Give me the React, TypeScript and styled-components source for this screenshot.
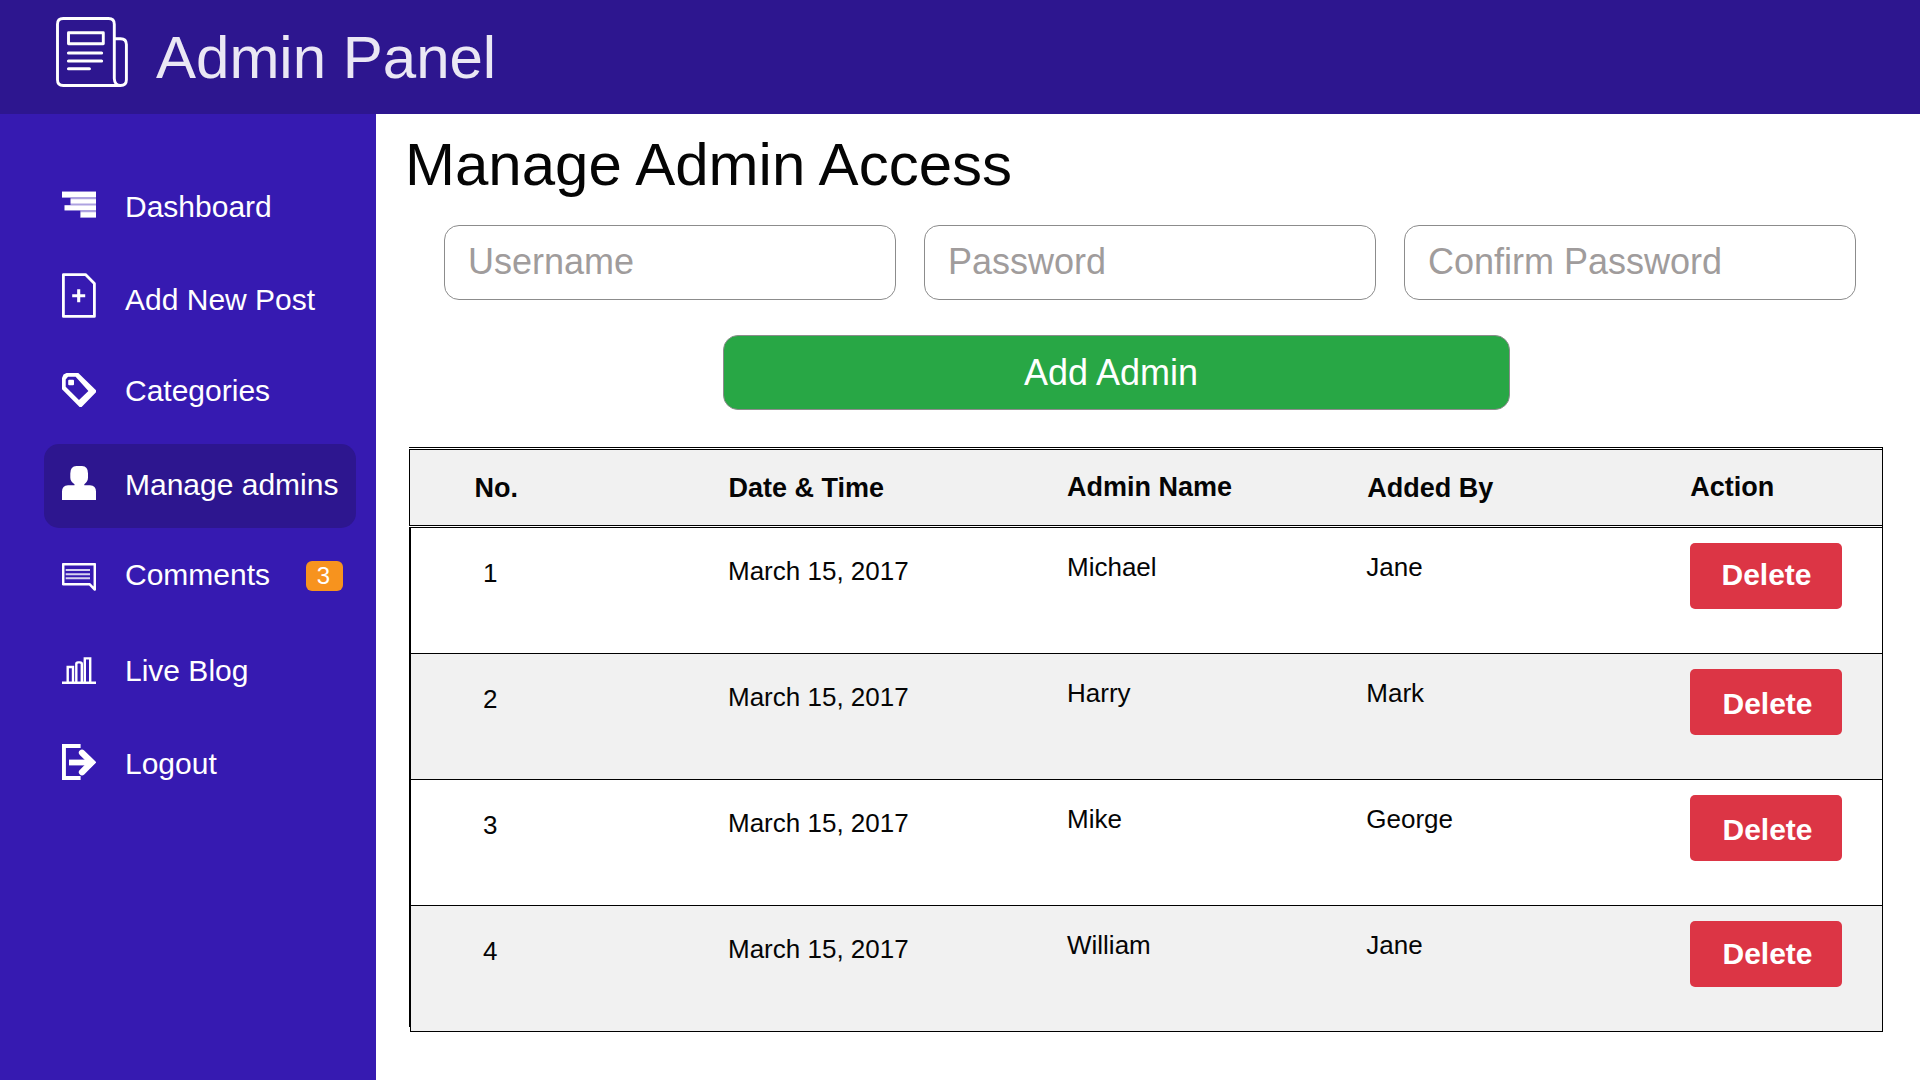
import React from "react";
import styled, { createGlobalStyle } from "styled-components";

const GlobalStyle = createGlobalStyle`
  *, *::before, *::after { box-sizing: border-box; }
  body {
    margin: 0;
    background: #fff;
    font-family: "Liberation Sans", Arial, Helvetica, sans-serif;
    color: #050505;
  }
  svg { display: block; flex: none; }
`;

const Page = styled.div`
  display: grid;
  grid-template: 114px 1fr / 376px 1fr;
  width: 1920px;
  height: 1080px;
  overflow: hidden;
`;

const Header = styled.header`
  grid-column: 1 / -1;
  display: flex;
  align-items: flex-start;
  gap: 28px;
  padding-left: 56px;
  background: #2d168f;

  svg { margin-top: 17px; }
`;

const Brand = styled.div`
  font-size: 60px;
  line-height: 116px;
  color: #eae7f4;
`;

const Sidebar = styled.nav`
  display: flex;
  flex-direction: column;
  padding: 52px 20px 0 44px;
  background: #361ab1;
`;

const NavItem = styled.a<{ $gap: number; $active?: boolean }>`
  display: flex;
  align-items: flex-start;
  flex: none;
  height: 84px;
  margin-top: ${(p) => p.$gap}px;
  padding: 0 13px 0 18px;
  border-radius: 15px;
  background: ${(p) => (p.$active ? "#2d168f" : "transparent")};
  color: #fff;
`;

const NavIcon = styled.span<{ $drop: number }>`
  flex: none;
  width: 34px;
  margin-top: ${(p) => p.$drop}px;
`;

const NavLabel = styled.span`
  margin-left: 29px;
  font-size: 30px;
  line-height: 81px;
  white-space: nowrap;
`;

const Badge = styled.span`
  width: 37px;
  height: 30px;
  margin: 27px 0 0 auto;
  padding-right: 2px;
  border-radius: 6px;
  background: #f7931e;
  font-size: 24px;
  line-height: 29px;
  text-align: center;
`;

const Main = styled.main`
  display: flex;
  flex-direction: column;
  align-items: flex-start;
`;

const Title = styled.h1`
  margin: 0 0 9px 29px;
  font-size: 60px;
  font-weight: 400;
  line-height: 102px;
`;

const Fields = styled.div`
  display: flex;
  gap: 28px;
  margin-left: 68px;
`;

const Field = styled.input`
  width: 452px;
  height: 75px;
  padding: 0 22px 1px 23px;
  border: 1px solid #8c8c8c;
  border-radius: 15px;
  background: #fff;
  font: 36px "Liberation Sans", Arial, sans-serif;

  &::placeholder { color: #a09c9c; opacity: 1; }
`;

const AddButton = styled.button`
  width: 787px;
  height: 75px;
  margin: 35px 0 37px 347px;
  padding: 0 11px 0 0;
  border: 1px solid #8c8c8c;
  border-radius: 15px;
  background: #28a745;
  color: #fff;
  font: 36px "Liberation Sans", Arial, sans-serif;
`;

const Table = styled.section`
  width: 1474px;
  margin-left: 33px;
`;

const columns = "253px 339px 300px 324px 1fr";

const HeadRow = styled.div`
  display: grid;
  grid-template-columns: ${columns};
  height: 81px;
  padding-left: 64px;
  border: solid #000;
  border-width: 3px 1px;
  border-top-style: double;
  border-bottom-style: double;
  background: #f1f1f1 padding-box;
`;

const HeadCell = styled.div<{ $line: number; $indent?: number }>`
  padding-left: ${(p) => p.$indent ?? 0}px;
  font-size: 27px;
  font-weight: 700;
  line-height: ${(p) => p.$line}px;
  white-space: nowrap;
`;

const Body = styled.div`
  padding-left: 1px;
  background: linear-gradient(#000, #000) 0 0 / 1px calc(100% - 5px) no-repeat;
`;

const Row = styled.div`
  display: grid;
  grid-template-columns: ${columns};
  height: 126px;
  padding-left: 63px;
  border: solid #000;
  border-width: 0 1px 1px;
  background: #fff;

  &:nth-child(even) { background: #f1f1f1; }
`;

const Cell = styled.div<{ $line: number; $indent?: number }>`
  padding-left: ${(p) => p.$indent ?? 0}px;
  font-size: 26px;
  line-height: ${(p) => p.$line}px;
  white-space: nowrap;
`;

const DeleteButton = styled.button<{ $line: number; $indent: number }>`
  display: block;
  width: 152px;
  height: 66px;
  margin-top: 15px;
  padding: 0 0 0 ${(p) => p.$indent}px;
  border: 0;
  border-radius: 5px;
  background: #dc3545;
  color: #fff;
  font: 700 30px "Liberation Sans", Arial, sans-serif;
  text-align: left;

  span {
    display: block;
    height: 66px;
    line-height: ${(p) => p.$line}px;
  }
`;

const NewspaperIcon = () => (
  <svg width="72" height="70" viewBox="0 0 72 70" fill="none" stroke="#fff" strokeWidth="2.9" strokeLinecap="round" strokeLinejoin="round">
    <path d="M58.3 21.8V7.3Q58.3 1.5 52.5 1.5H7.2Q1.5 1.5 1.5 7.3V62.7Q1.5 68.5 7.2 68.5H64.5Q70.4 68.5 70.4 62.7V27.6Q70.4 21.8 64.5 21.8H58.3V61.5Q58.6 68.5 64.5 68.5" />
    <path d="M12.5 15.7H47.3V26.8H12.5Z" />
    <path strokeWidth="3.1" d="M12.5 36H45.6M12.5 44H45.6M12.5 51.8H33.4" />
  </svg>
);

const DashboardIcon = () => (
  <svg width="34" height="27" viewBox="0 0 34 27" fill="#fff">
    <path opacity=".6" d="M0 .3H34V27H18.3V19.7H2.5V14H8.5V7H0Z" />
    <path d="M0 1H34V6H0ZM8.7 8.3H34V12.6H8.7ZM2.7 14.6H34V19H2.7ZM18.7 21.3H34V26H18.7Z" />
  </svg>
);

const AddPostIcon = () => (
  <svg width="34" height="45" viewBox="0 0 34 45" fill="none" stroke="#fff">
    <path strokeWidth="2.8" strokeLinejoin="round" d="M1.4 1.6H23.5L32.4 10.4V43.4H1.4Z" />
    <path strokeWidth="3.1" d="M16.7 16.2V29.2M10.2 22.7H23.2" />
  </svg>
);

const TagIcon = () => (
  <svg width="34" height="35" viewBox="0 0 34 35" fill="#fff">
    <path fillRule="evenodd" d="M1.5 1.5L4.5 0H16.3L34 17.3V19.2L19.6 34H17.6L0 16.3V5ZM6 3.8L3.7 6.5V13.8L17 27L26.4 18L13.6 3.8Z" />
    <rect x="6.2" y="6.8" width="5.8" height="5.4" rx="1" />
  </svg>
);

const UserIcon = () => (
  <svg width="34" height="34" viewBox="0 0 34 34" fill="#fff">
    <path d="M8.3 7.5Q8.3 0 14.5 0H20Q26 0 26 7.5V11.5Q26 15.5 22.3 18.3V19.2H28Q34 19.8 34 25.5V34H0V25.5Q0 19.8 6 19.2H12.5V18.3Q8.3 15.5 8.3 11.5Z" />
  </svg>
);

const CommentIcon = () => (
  <svg width="34" height="28" viewBox="0 0 34 28" fill="none" stroke="#fff">
    <path strokeWidth="2.5" strokeLinejoin="round" d="M1.2 1.2H32.8V26.6L27.5 21.2H1.2Z" />
    <path strokeWidth="2.1" opacity=".8" d="M3.7 7H28M3.7 11.2H28M3.7 15.2H28" />
  </svg>
);

const ChartIcon = () => (
  <svg width="34" height="27" viewBox="0 0 34 27" fill="none" stroke="#fff" strokeWidth="2.4">
    <path d="M5.7 25V10H11V25M14.3 25V7Q14.3 5.4 16 5.4H18Q19.8 5.4 19.8 7V25M22.8 25V1.4H28.2V25" />
    <path strokeWidth="2.6" d="M0 25.7H34" />
  </svg>
);

const LogoutIcon = () => (
  <svg width="34" height="36" viewBox="0 0 34 36" fill="none" stroke="#fff">
    <path strokeWidth="3.9" d="M18.6 2H1.95V34H18.6" />
    <path strokeWidth="5.8" d="M7 18.5H27" />
    <path strokeWidth="6.3" strokeLinecap="round" d="M20 8.8L29.7 18.3L20 28.2" />
    <path fill="#fff" stroke="none" d="M28 12.5L34 18.4L28 24.3Z" />
  </svg>
);

const navItems = [
  { label: "Dashboard", icon: <DashboardIcon />, gap: 0, drop: 25 },
  { label: "Add New Post", icon: <AddPostIcon />, gap: 9, drop: 14 },
  { label: "Categories", icon: <TagIcon />, gap: 7, drop: 23 },
  { label: "Manage admins", icon: <UserIcon />, gap: 10, drop: 22, active: true },
  { label: "Comments", icon: <CommentIcon />, gap: 6, drop: 29, badge: 3 },
  { label: "Live Blog", icon: <ChartIcon />, gap: 12, drop: 27 },
  { label: "Logout", icon: <LogoutIcon />, gap: 9, drop: 21 },
];

const admins = [
  { no: 1, date: "March 15, 2017", name: "Michael", addedBy: "Jane", line: 63, indent: 31.5 },
  { no: 2, date: "March 15, 2017", name: "Harry", addedBy: "Mark", line: 69, indent: 32.5 },
  { no: 3, date: "March 15, 2017", name: "Mike", addedBy: "George", line: 69, indent: 32.5 },
  { no: 4, date: "March 15, 2017", name: "William", addedBy: "Jane", line: 65, indent: 32.5 },
];

export default function App() {
  return (
    <Page>
      <GlobalStyle />
      <Header>
        <NewspaperIcon />
        <Brand>Admin Panel</Brand>
      </Header>
      <Sidebar>
        {navItems.map((item) => (
          <NavItem key={item.label} $gap={item.gap} $active={item.active}>
            <NavIcon $drop={item.drop}>{item.icon}</NavIcon>
            <NavLabel>{item.label}</NavLabel>
            {item.badge && <Badge>{item.badge}</Badge>}
          </NavItem>
        ))}
      </Sidebar>
      <Main>
        <Title>Manage Admin Access</Title>
        <Fields>
          <Field placeholder="Username" />
          <Field placeholder="Password" />
          <Field placeholder="Confirm Password" />
        </Fields>
        <AddButton>Add Admin</AddButton>
        <Table>
          <HeadRow>
            <HeadCell $line={77} $indent={0.5}>No.</HeadCell>
            <HeadCell $line={77} $indent={1.5}>Date &amp; Time</HeadCell>
            <HeadCell $line={75} $indent={1}>Admin Name</HeadCell>
            <HeadCell $line={77} $indent={1.3}>Added By</HeadCell>
            <HeadCell $line={75} $indent={0.3}>Action</HeadCell>
          </HeadRow>
          <Body>
            {admins.map((admin) => (
              <Row key={admin.no}>
                <Cell $line={90} $indent={9}>{admin.no}</Cell>
                <Cell $line={86} $indent={1}>{admin.date}</Cell>
                <Cell $line={78} $indent={1}>{admin.name}</Cell>
                <Cell $line={78} $indent={0.3}>{admin.addedBy}</Cell>
                <div>
                  <DeleteButton $line={admin.line} $indent={admin.indent}>
                    <span>Delete</span>
                  </DeleteButton>
                </div>
              </Row>
            ))}
          </Body>
        </Table>
      </Main>
    </Page>
  );
}
